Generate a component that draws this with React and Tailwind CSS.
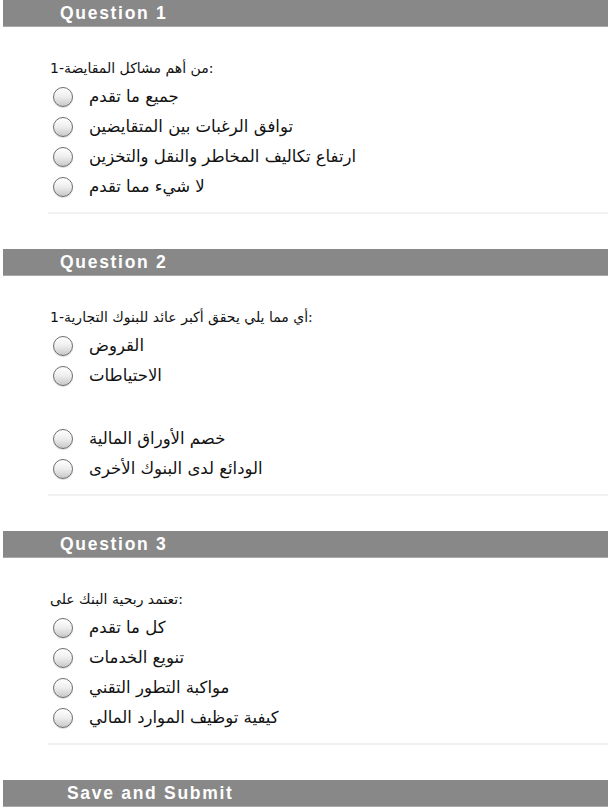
import React from "react";

const questions = [
  {
    title: "Question 1",
    q: "1-من أهم مشاكل المقايضة:",
    groups: [["جميع ما تقدم", "توافق الرغبات بين المتقايضين", "ارتفاع تكاليف المخاطر والنقل والتخزين", "لا شيء مما تقدم"]],
  },
  {
    title: "Question 2",
    q: "1-أي مما يلي يحقق أكبر عائد للبنوك التجارية:",
    groups: [["القروض", "الاحتياطات"], ["خصم الأوراق المالية", "الودائع لدى البنوك الأخرى"]],
  },
  {
    title: "Question 3",
    q: "تعتمد ربحية البنك على:",
    groups: [["كل ما تقدم", "تنويع الخدمات", "مواكبة التطور التقني", "كيفية توظيف الموارد المالي"]],
  },
];

function Bar({ children, pad = "pl-[57px]" }) {
  return (
    <div className={`ml-[3px] h-[27px] bg-[#888888] border-b border-[#a8a8a8] flex items-center text-white font-bold text-[17.5px] tracking-[1.7px] font-['Liberation_Sans',Arial,sans-serif] ${pad}`}>
      {children}
    </div>
  );
}

function Option({ label }) {
  return (
    <div className="h-[30px] flex items-center pl-[5px]">
      <span className="w-[20px] h-[20px] rounded-full border border-[#6e6e6e] bg-linear-to-b from-white via-[#ededed] to-[#c8c8c8] shadow-[0_1px_1px_rgba(0,0,0,0.15)] shrink-0" />
      <span className="ml-[16px] text-[16.5px] text-[#111] font-['DejaVu_Sans','Noto_Sans',sans-serif]">{label}</span>
    </div>
  );
}

export default function App() {
  return (
    <div className="w-[608px] min-h-[810px] bg-white">
      {questions.map((item) => (
        <div key={item.title}>
          <Bar>{item.title}</Bar>
          <div className="ml-[48px] pt-[27px]">
            <div className="h-[28px] flex items-center pl-[2px] text-[14px] text-[#111] font-['DejaVu_Sans','Noto_Sans',sans-serif]">
              {item.q}
            </div>
            {item.groups.map((g, gi) => (
              <div key={gi} className={gi > 0 ? "mt-[33px]" : ""}>
                {g.map((o) => (
                  <Option key={o} label={o} />
                ))}
              </div>
            ))}
            <div className="mt-[10px] h-[2px] bg-[#f1f1f1]" />
            <div className="h-[35px]" />
          </div>
        </div>
      ))}
      <Bar pad="pl-[64px]">Save and Submit</Bar>
    </div>
  );
}
